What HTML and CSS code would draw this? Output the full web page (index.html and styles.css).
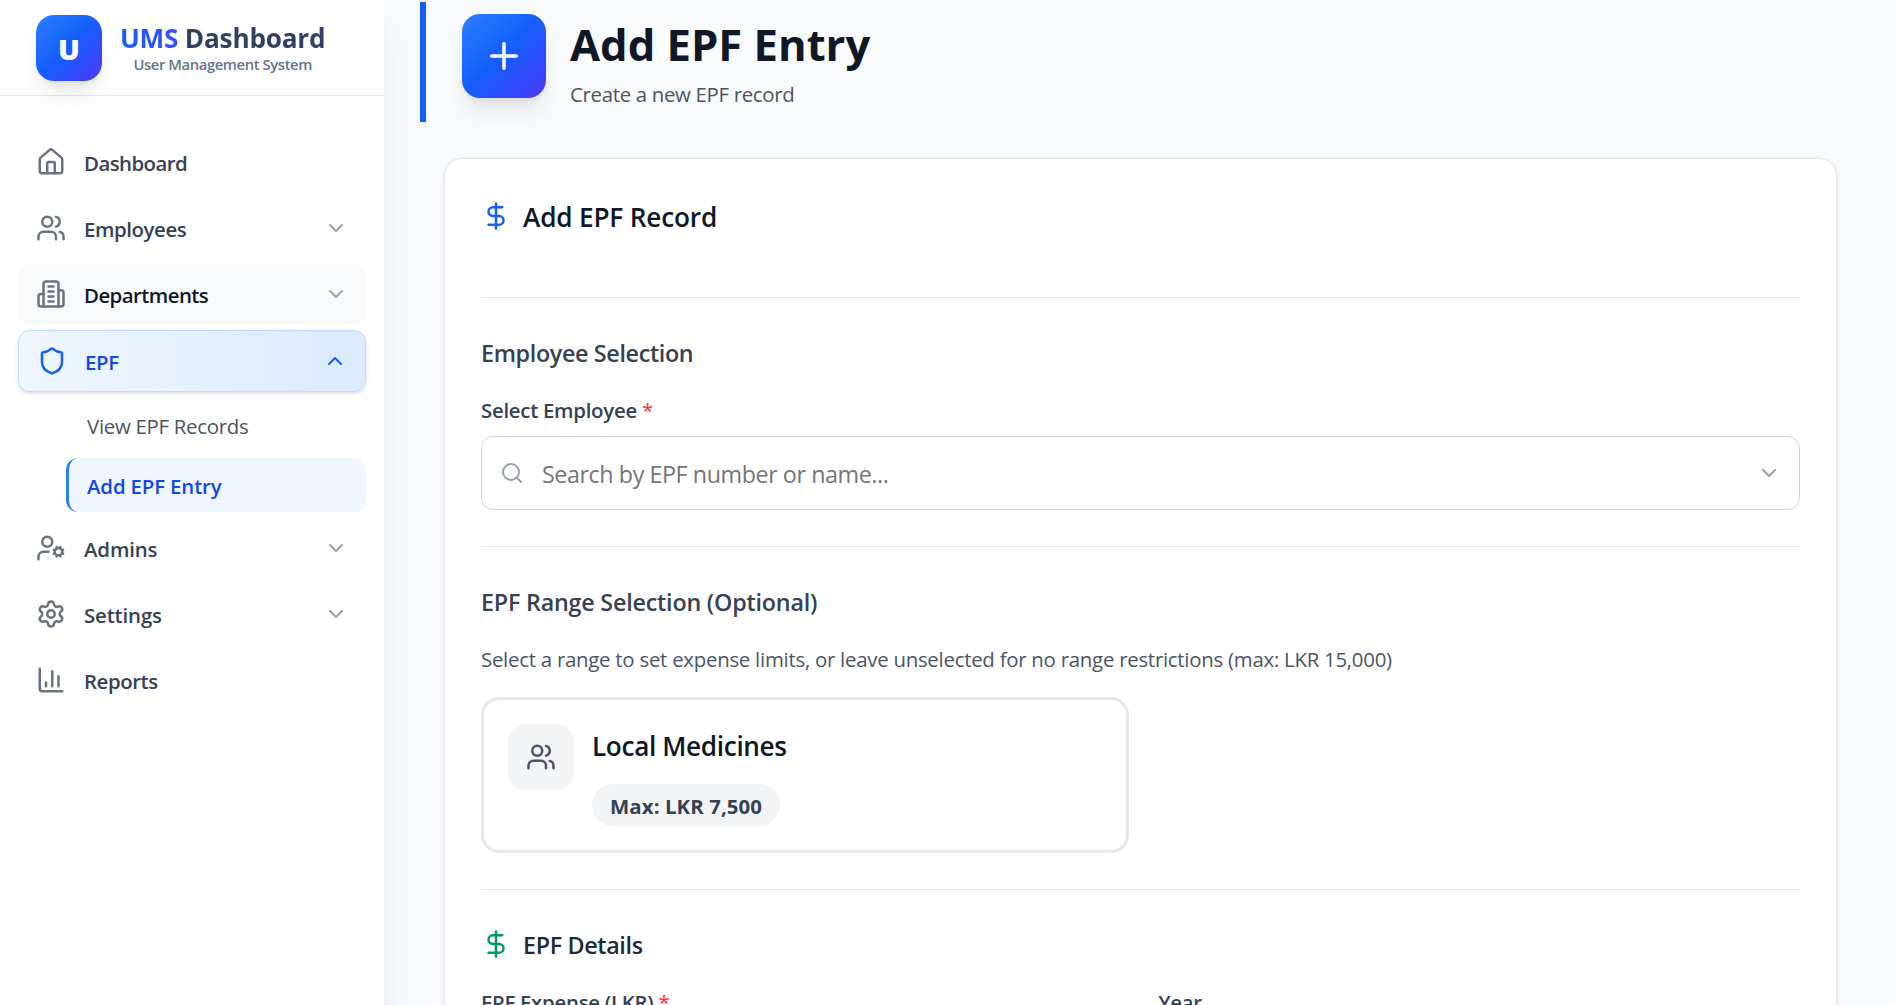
FILE: index.html
```html
<!DOCTYPE html>
<html lang="en">
<head>
<meta charset="utf-8">
<title>UMS Dashboard</title>
<link rel="stylesheet" href="styles.css">
</head>
<body>
<svg class="sprite" aria-hidden="true">
  <symbol id="house" viewBox="0 0 24 24"><path d="M15 21v-8a1 1 0 0 0-1-1h-4a1 1 0 0 0-1 1v8"/><path d="M3 10a2 2 0 0 1 .709-1.528l7-5.999a2 2 0 0 1 2.582 0l7 5.999A2 2 0 0 1 21 10v9a2 2 0 0 1-2 2H5a2 2 0 0 1-2-2z"/></symbol>
  <symbol id="users" viewBox="0 0 24 24"><path d="M16 21v-2a4 4 0 0 0-4-4H6a4 4 0 0 0-4 4v2"/><path d="M16 3.128a4 4 0 0 1 0 7.744"/><path d="M22 21v-2a4 4 0 0 0-3-3.87"/><circle cx="9" cy="7" r="4"/></symbol>
  <symbol id="building" viewBox="0 0 24 24"><path d="M6 22V4a2 2 0 0 1 2-2h8a2 2 0 0 1 2 2v18Z"/><path d="M6 12H4a2 2 0 0 0-2 2v6a2 2 0 0 0 2 2h2"/><path d="M18 9h2a2 2 0 0 1 2 2v9a2 2 0 0 1-2 2h-2"/><path d="M10 6h4M10 10h4M10 14h4M10 18h4"/></symbol>
  <symbol id="shield" viewBox="0 0 24 24"><path d="M20 13c0 5-3.5 7.5-7.66 8.95a1 1 0 0 1-.67-.01C7.5 20.5 4 18 4 13V6a1 1 0 0 1 1-1c2 0 4.5-1.2 6.24-2.72a1.17 1.17 0 0 1 1.52 0C14.51 3.81 17 5 19 5a1 1 0 0 1 1 1z"/></symbol>
  <symbol id="user-cog" viewBox="0 0 24 24"><path d="M10 15H6a4 4 0 0 0-4 4v2"/><path d="m14.305 16.53.923-.382M15.228 13.852l-.923-.383M16.852 12.228l-.383-.923M16.852 17.772l-.383.924M19.148 12.228l.383-.923M19.53 18.696l-.382-.924M20.772 13.852l.924-.383M20.772 16.148l.924.383"/><circle cx="18" cy="15" r="3"/><circle cx="9" cy="7" r="4"/></symbol>
  <symbol id="settings" viewBox="0 0 24 24"><path d="M9.671 4.136a2.34 2.34 0 0 1 4.659 0 2.34 2.34 0 0 0 3.319 1.915 2.34 2.34 0 0 1 2.33 4.033 2.34 2.34 0 0 0 0 3.831 2.34 2.34 0 0 1-2.33 4.033 2.34 2.34 0 0 0-3.319 1.915 2.34 2.34 0 0 1-4.659 0 2.34 2.34 0 0 0-3.32-1.915 2.34 2.34 0 0 1-2.33-4.033 2.34 2.34 0 0 0 0-3.831A2.34 2.34 0 0 1 6.35 6.051a2.34 2.34 0 0 0 3.319-1.915"/><circle cx="12" cy="12" r="3"/></symbol>
  <symbol id="chart" viewBox="0 0 24 24"><path d="M3 3v16a2 2 0 0 0 2 2h16"/><path d="M18 17V9M13 17V5M8 17v-3"/></symbol>
  <symbol id="down" viewBox="0 0 24 24"><path d="m6 9 6 6 6-6"/></symbol>
  <symbol id="up" viewBox="0 0 24 24"><path d="m18 15-6-6-6 6"/></symbol>
  <symbol id="plus" viewBox="0 0 24 24"><path d="M5 12h14M12 5v14"/></symbol>
  <symbol id="dollar" viewBox="0 0 24 24"><path d="M12 2v20"/><path d="M17 5H9.5a3.5 3.5 0 0 0 0 7h5a3.5 3.5 0 0 1 0 7H6"/></symbol>
  <symbol id="search" viewBox="0 0 24 24"><path d="m21 21-4.34-4.34"/><circle cx="11" cy="11" r="8"/></symbol>
</svg>

<div class="app">
  <aside class="sidebar">
    <header class="brand">
      <div class="brand-logo">U</div>
      <div class="brand-text">
        <div class="brand-name"><span class="brand-accent">UMS</span> <span class="brand-rest">Dashboard</span></div>
        <div class="brand-sub">User Management System</div>
      </div>
    </header>
    <nav class="nav">
      <a class="nav-item"><svg class="icon"><use href="#house"/></svg><span class="nav-label track-tight">Dashboard</span></a>
      <a class="nav-item"><svg class="icon"><use href="#users"/></svg><span class="nav-label track-mid">Employees</span><svg class="chevron"><use href="#down"/></svg></a>
      <a class="nav-item is-hover"><svg class="icon"><use href="#building"/></svg><span class="nav-label track-tight">Departments</span><svg class="chevron"><use href="#down"/></svg></a>
      <a class="nav-item is-active"><svg class="icon"><use href="#shield"/></svg><span class="nav-label">EPF</span><svg class="chevron"><use href="#up"/></svg></a>
      <div class="subnav">
        <a class="sub-item"><span class="nav-label">View EPF Records</span></a>
        <a class="sub-item is-current"><span class="nav-label track-wide">Add EPF Entry</span></a>
      </div>
      <a class="nav-item"><svg class="icon"><use href="#user-cog"/></svg><span class="nav-label track-wide">Admins</span><svg class="chevron"><use href="#down"/></svg></a>
      <a class="nav-item"><svg class="icon"><use href="#settings"/></svg><span class="nav-label track-wide">Settings</span><svg class="chevron"><use href="#down"/></svg></a>
      <a class="nav-item"><svg class="icon"><use href="#chart"/></svg><span class="nav-label track-mid">Reports</span></a>
    </nav>
  </aside>

  <main class="main">
    <header class="page-head">
      <div class="page-icon"><svg><use href="#plus"/></svg></div>
      <div class="page-text">
        <h1>Add EPF Entry</h1>
        <p>Create a new EPF record</p>
      </div>
    </header>

    <section class="card">
      <div class="card-head">
        <svg class="icon blue"><use href="#dollar"/></svg>
        <h2>Add EPF Record</h2>
      </div>

      <div class="section">
        <h3>Employee Selection</h3>
        <label class="field-label">Select Employee <span class="req">*</span></label>
        <div class="search">
          <svg><use href="#search"/></svg>
          <span class="placeholder">Search by EPF number or name...</span>
          <svg><use href="#down"/></svg>
        </div>
      </div>

      <div class="section">
        <h3 class="range-title">EPF Range Selection (Optional)</h3>
        <p class="hint">Select a range to set expense limits, or leave unselected for no range restrictions (max: LKR 15,000)</p>
        <div class="ranges">
          <div class="range">
            <div class="range-icon"><svg class="icon"><use href="#users"/></svg></div>
            <div class="range-body">
              <h4>Local Medicines</h4>
              <span class="pill">Max: LKR 7,500</span>
            </div>
          </div>
        </div>
      </div>

      <div class="section">
        <div class="details-head">
          <svg class="icon green"><use href="#dollar"/></svg>
          <h3 class="details-title">EPF Details</h3>
        </div>
        <div class="fields">
          <label class="field-label">EPF Expense (LKR) <span class="req">*</span></label>
          <label class="field-label">Year</label>
        </div>
      </div>
    </section>
  </main>
</div>
</body>
</html>
```
FILE: styles.css
```css
* { box-sizing: border-box; }
html, body { height: 100%; margin: 0; overflow: hidden; }
body {
  background: #f9fafb;
  color: #364153;
  font-family: "Open Sans", "Noto Sans", sans-serif;
  font-size: 20.4px;
  line-height: 28px;
}
h1, h2, h3, h4, p { margin: 0; }
svg { display: block; flex: none; fill: none; stroke: currentColor; stroke-width: 2; stroke-linecap: round; stroke-linejoin: round; }
.sprite { display: none; }
.icon { width: 30px; height: 30px; }

.app { display: flex; height: 100%; overflow: hidden; }

/* Sidebar */
.sidebar {
  position: relative;
  z-index: 1;
  flex: none;
  width: 384px;
  background: #fff;
  box-shadow: 0 30px 37.5px -7.5px rgba(0, 0, 0, .1), 0 12px 15px -9px rgba(0, 0, 0, .1);
}
.brand {
  display: flex;
  align-items: center;
  gap: 18px;
  height: 96px;
  padding: 15px 36px 14px;
  border-bottom: 1px solid #e5e7eb;
}
.brand-logo {
  display: flex;
  align-items: center;
  justify-content: center;
  width: 66px;
  height: 66px;
  padding-top: 1px;
  border-radius: 18px;
  background: linear-gradient(135deg, #2b7fff, #155dfc 50%, #4f39f6);
  box-shadow: 0 15px 22px -4.5px rgba(0, 0, 0, .1), 0 6px 9px -6px rgba(0, 0, 0, .1);
  color: #fff;
  font-size: 29px;
  font-weight: 800;
}
.brand-text { text-align: center; white-space: nowrap; }
.brand-name { font-size: 26.2px; font-weight: 700; line-height: 32px; letter-spacing: -.22px; }
.brand-accent { background: linear-gradient(90deg, #155dfc, #3b4ff8); background-clip: text; color: transparent; }
.brand-rest { background: linear-gradient(90deg, #314158, #333f66); background-clip: text; color: transparent; }
.brand-sub { color: #62748e; font-size: 14.8px; font-weight: 600; line-height: 20px; letter-spacing: -.4px; }

.nav { display: flex; flex-direction: column; gap: 6px; padding: 36px 18px; }
.nav-item {
  display: flex;
  align-items: center;
  gap: 18px;
  height: 60px;
  padding: 0 18px;
  border-radius: 12px;
  color: #6a7282;
}
.nav-label { flex: 1; padding-top: 2px; color: #364153; font-weight: 600; letter-spacing: -.28px; white-space: nowrap; }
.chevron { width: 24px; height: 24px; color: #99a1af; }
.track-tight { letter-spacing: -.55px; }
.track-mid { letter-spacing: -.42px; }
.track-wide { letter-spacing: -.14px; }
.is-hover { background: #f9fafb; }
.is-hover .nav-label { color: #101828; }
.is-active {
  height: 62px;
  border: 1px solid #bedbff;
  background: linear-gradient(90deg, #eff6ff, #dbeafe);
  box-shadow: 0 1.5px 4.5px rgba(0, 0, 0, .1), 0 1.5px 3px -1.5px rgba(0, 0, 0, .1);
  color: #155dfc;
}
.is-active .nav-label { color: #1447e6; }
.is-active .chevron { color: #155dfc; }
.subnav { display: flex; flex-direction: column; gap: 6px; margin-left: 48px; }
.sub-item {
  display: flex;
  align-items: center;
  height: 54px;
  padding: 0 18px;
  border-left: 3px solid transparent;
  border-radius: 12px;
}
.sub-item .nav-label { color: #4a5565; font-weight: 400; }
.is-current { border-left-color: #2b7fff; background: #eff6ff; }
.is-current .nav-label { color: #1447e6; font-weight: 600; }

/* Page */
.main { flex: 1; min-width: 0; padding: 2px 58px 0 36px; }
.page-head {
  display: flex;
  gap: 24px;
  height: 120px;
  padding: 12px 36px;
  border-left: 6px solid #155dfc;
}
.page-icon {
  display: flex;
  align-items: center;
  justify-content: center;
  width: 84px;
  height: 84px;
  border-radius: 18px;
  background: linear-gradient(135deg, #2b7fff, #155dfc 50%, #4f39f6);
  box-shadow: 0 15px 22px -4.5px rgba(0, 0, 0, .1), 0 6px 9px -6px rgba(0, 0, 0, .1);
  color: #fff;
}
.page-icon svg { width: 42px; height: 42px; }
.page-text { display: flex; flex-direction: column; gap: 7px; padding-top: 3px; }
h1 { color: #101828; font-size: 43.6px; font-weight: 700; line-height: 54px; }
.page-text p { color: #4a5565; line-height: 32px; letter-spacing: -.32px; }

.card {
  height: 1100px;
  margin: 36px 0 0 24px;
  padding: 36px;
  border: 1px solid #e5e7eb;
  border-radius: 18px;
  background: #fff;
  box-shadow: 0 1.5px 4.5px rgba(0, 0, 0, .1), 0 1.5px 3px -1.5px rgba(0, 0, 0, .1);
}
.card-head { display: flex; gap: 12px; height: 103px; padding-top: 4px; }
.card-head .icon { margin-top: 2px; }
.card-head, .section { border-bottom: 1px solid #e5e7eb; }
h2 { color: #101828; font-size: 26.2px; font-weight: 600; line-height: 36px; letter-spacing: -.18px; }
.section { padding: 39px 0 36px; }
h3 { color: #364153; font-size: 23.3px; font-weight: 600; line-height: 32px; letter-spacing: -.33px; }
.range-title { letter-spacing: -.2px; }
.blue { color: #155dfc; }
.green { color: #009966; }

.field-label { display: block; font-weight: 600; letter-spacing: -.27px; }
h3 + .field-label { margin-top: 27px; }
.req { color: #fb2c36; font-weight: 500; }
.search {
  display: flex;
  align-items: center;
  gap: 18px;
  height: 74px;
  margin-top: 12px;
  padding: 0 18px;
  border: 1px solid #d1d5dc;
  border-radius: 12px;
  color: #99a1af;
}
.search svg { width: 24px; height: 24px; }
.placeholder { flex: 1; padding-top: 2px; color: #757575; font-size: 23.3px; letter-spacing: -.43px; }

.hint { margin: 27px 0 24px; color: #4a5565; letter-spacing: -.255px; }
.ranges { display: grid; grid-template-columns: 1fr 1fr; gap: 24px; }
.range { display: flex; gap: 18px; height: 156px; padding: 24px; border: 3px solid #e5e7eb; border-radius: 18px; }
.range-icon {
  display: flex;
  align-items: center;
  justify-content: center;
  width: 66px;
  height: 66px;
  border-radius: 18px;
  background: #f3f4f6;
  color: #4a5565;
}
.range-body { display: flex; flex-direction: column; align-items: flex-start; gap: 20px; padding-top: 4px; }
h4 { color: #101828; font-size: 26.2px; font-weight: 600; line-height: 36px; letter-spacing: -.36px; }
.pill { height: 42px; padding: 8px 18px 6px; border-radius: 21px; background: #f3f4f6; font-weight: 700; letter-spacing: .1px; }

.details-head { display: flex; gap: 12px; }
.details-title { color: #1e2939; }
.fields { display: grid; grid-template-columns: 1fr 1fr; gap: 36px; margin-top: 27px; }
```
